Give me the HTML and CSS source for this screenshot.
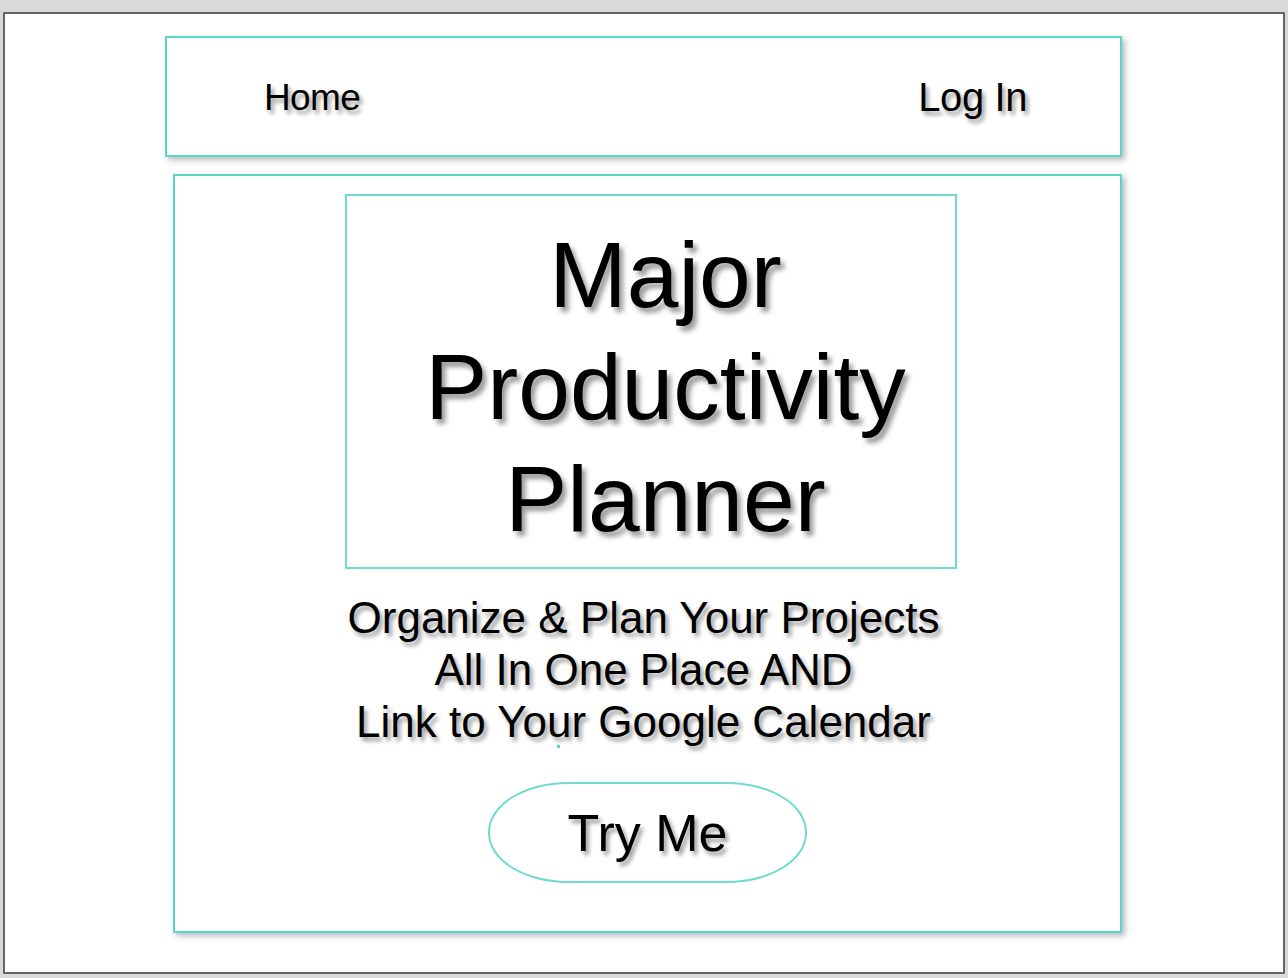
FILE: index.html
```html
<!DOCTYPE html>
<html lang="en">
<head>
<meta charset="utf-8">
<title>Major Productivity Planner</title>
<link rel="stylesheet" href="styles.css">
</head>
<body>
<div class="frame">
  <div class="wrap">
    <nav class="nav">
      <a class="nav-home" href="#">Home</a>
      <a class="nav-login" href="#">Log In</a>
    </nav>
    <main class="main">
      <div class="title-box">
        <h1 class="title">Major<br>Productivity<br>Planner</h1>
      </div>
      <p class="subtitle">Organize &amp; Plan Your Projects<br>All In One Place AND<br>Link to Your Google Calendar</p>
      <span class="dot"></span>
      <a class="try" href="#">Try Me</a>
    </main>
  </div>
</div>
</body>
</html>
```

FILE: styles.css
```css
html, body {
  margin: 0;
  padding: 0;
}
body {
  background: #d9d9d9;
  width: 1288px;
  height: 978px;
  overflow: hidden;
  font-family: "Liberation Sans", Arial, Helvetica, sans-serif;
  color: #000;
}
.frame {
  box-sizing: border-box;
  margin: 12px 3px 0 3px;
  width: 1282px;
  height: 962px;
  background: #fff;
  border: 2px solid #666;
  padding-top: 22px;
}
.wrap {
  width: 957px;
  margin-left: 160px;
  display: flex;
  flex-direction: column;
  gap: 17px;
}
.nav {
  box-sizing: border-box;
  height: 121px;
  border: 2px solid #5ad5cb;
  box-shadow: 3px 3px 6px rgba(0, 0, 0, 0.28);
  display: flex;
  justify-content: space-between;
  align-items: center;
  padding: 0 93px 0 97px;
}
.nav a {
  color: #000;
  text-decoration: none;
  text-shadow: 3px 4px 4px rgba(0, 0, 0, 0.4);
  line-height: 1;
}
.nav-home {
  font-size: 37px;
  letter-spacing: -0.6px;
  padding-top: 1px;
}
.nav-login {
  font-size: 40px;
  letter-spacing: -0.4px;
}
.main {
  position: relative;
  box-sizing: border-box;
  margin-left: 8px;
  height: 759px;
  border: 2px solid #5ad5cb;
  box-shadow: 3px 3px 6px rgba(0, 0, 0, 0.28);
  padding-top: 18px;
  display: flex;
  flex-direction: column;
  align-items: center;
}
.title-box {
  box-sizing: border-box;
  width: 612px;
  height: 375px;
  margin-left: 6px;
  border: 2px solid #6fdad1;
  padding: 23px 0 0 30px;
}
.title {
  margin: 0;
  font-size: 93px;
  font-weight: normal;
  line-height: 112px;
  text-align: center;
  text-shadow: 4px 5px 5px rgba(0, 0, 0, 0.4);
}
.subtitle {
  margin: 23px 8px 0 0;
  font-size: 44px;
  line-height: 52px;
  text-align: center;
  text-shadow: 3px 4px 4px rgba(0, 0, 0, 0.4);
}
.dot {
  position: absolute;
  left: 382px;
  top: 569px;
  width: 3px;
  height: 3px;
  background: #5ad5cb;
}
.try {
  box-sizing: border-box;
  margin-top: 34px;
  width: 319px;
  height: 101px;
  border: 2px solid #6fdad1;
  border-radius: 80px / 50px;
  display: flex;
  align-items: center;
  justify-content: center;
  font-size: 52px;
  color: #000;
  text-decoration: none;
  text-shadow: 3px 4px 4px rgba(0, 0, 0, 0.4);
}
```
